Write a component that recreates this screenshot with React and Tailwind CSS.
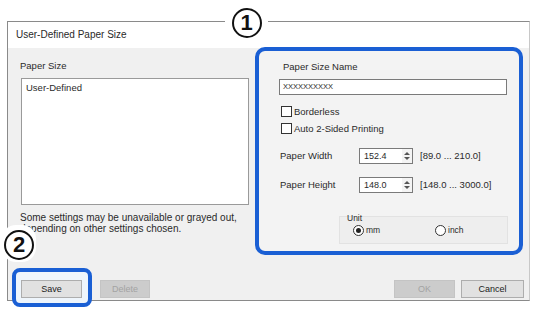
import React from "react";

const Btn = ({ children, disabled, className = "" }) => (
  <div
    className={`h-[18px] flex items-center justify-center border text-[9px] ${
      disabled
        ? "bg-[#cccccc] border-[#c4c4c4] text-[#a3a3a3]"
        : "bg-[#e1e1e1] border-[#adadad] text-[#222]"
    } ${className}`}
  >
    {children}
  </div>
);

const Check = ({ label }) => (
  <div className="flex items-center gap-[2px] h-[11px]">
    <div className="w-[11px] h-[11px] border border-[#333] bg-white" />
    <span>{label}</span>
  </div>
);

const Spin = ({ value }) => (
  <div className="w-[54px] h-[16px] flex border border-[#7a7a7a] bg-white">
    <div className="flex-1 pl-[4px] flex items-center text-[9px]">{value}</div>
    <div className="w-[10px] flex flex-col items-center justify-center gap-[2px] bg-[#f4f4f4]">
      <div className="w-0 h-0 border-l-[3px] border-r-[3px] border-b-[3px] border-l-transparent border-r-transparent border-b-[#555]" />
      <div className="w-0 h-0 border-l-[3px] border-r-[3px] border-t-[3px] border-l-transparent border-r-transparent border-t-[#555]" />
    </div>
  </div>
);

const Radio = ({ label, checked }) => (
  <div className="flex items-center gap-[2px]">
    <div className="w-[11px] h-[11px] rounded-full border border-[#333] bg-white flex items-center justify-center">
      {checked && <div className="w-[5px] h-[5px] rounded-full bg-[#222]" />}
    </div>
    <span>{label}</span>
  </div>
);

const Badge = ({ n }) => (
  <div className="w-[30px] h-[30px] rounded-full border-2 border-[#111] bg-white flex items-center justify-center text-[22px] font-bold leading-none text-[#111]">
    {n}
  </div>
);

export default function App() {
  return (
    <div
      className="relative w-[534px] h-[310px] overflow-hidden bg-white pt-[21px] pl-[7px] text-[#2a2a2a] text-[9.5px] leading-[12px]"
      style={{ fontFamily: '"Liberation Sans", Arial, sans-serif' }}
    >
      <div className="w-[523px] h-[280px] flex flex-col border border-[#8a8a8a] border-r-[#c8c8c8]">
        {/* title */}
        <div className="h-[26px] bg-white flex items-center pl-[8px] text-[10px]">
          User-Defined Paper Size
        </div>

        {/* body */}
        <div className="flex-1 bg-[#f0f0f0] flex flex-col">
          <div className="flex items-start">
            {/* left column */}
            <div className="ml-[12px] w-[229px] pt-[12px]">
              <div>Paper Size</div>
              <div className="ml-[1px] mt-[6px] h-[127px] bg-white border border-[#9a9a9a] pl-[4px] pt-[3px]">
                User-Defined
              </div>
              <div className="mt-[7px] leading-[11px] text-[10px] whitespace-nowrap">
                <div>Some settings may be unavailable or grayed out,</div>
                <div>depending on other settings chosen.</div>
              </div>
            </div>

            {/* right panel */}
            <div className="ml-[6px] -mt-[1px] w-[268px] h-[208px] border-[4px] border-[#1a5fd4] rounded-[10px] bg-[#f3f3f3] pl-[20px] pt-[10px]">
              <div className="ml-[4px]">Paper Size Name</div>
              <div className="mt-[6px] w-[228px] h-[16px] bg-white border border-[#7a7a7a] pl-[3px] flex items-center text-[7.5px]">
                XXXXXXXXXX
              </div>
              <div className="ml-[2px] mt-[11px] flex flex-col gap-[6px]">
                <Check label="Borderless" />
                <Check label="Auto 2-Sided Printing" />
              </div>
              <div className="mt-[14px] flex items-center">
                <div className="w-[80px] pl-[1px]">Paper Width</div>
                <Spin value="152.4" />
                <div className="ml-[7px]">[89.0 ... 210.0]</div>
              </div>
              <div className="mt-[13px] flex items-center">
                <div className="w-[80px] pl-[1px]">Paper Height</div>
                <Spin value="148.0" />
                <div className="ml-[7px]">[148.0 ... 3000.0]</div>
              </div>
              <div className="ml-[60px] mt-[23px] w-[169px] h-[28px] border border-[#e2e2e2] bg-[#eeeeee] text-[8.5px]">
                <div className="ml-[7px] -mt-[3px] leading-[9px]">Unit</div>
                <div className="flex items-center mt-[1px] ml-[13px]">
                  <div className="w-[82px]">
                    <Radio label="mm" checked />
                  </div>
                  <Radio label="inch" />
                </div>
              </div>
            </div>
          </div>

          {/* footer */}
          <div className="mt-auto pb-[2px] flex items-end justify-between pl-[13px] pr-[5px]">
            <div className="flex items-center gap-[18px]">
              <div className="relative">
                <div className="absolute -left-[9px] -right-[10px] -top-[12px] -bottom-[9px] border-[4px] border-[#1a5fd4] rounded-[8px] bg-[#eef5fc]" />
                <Btn className="relative w-[61px] border-[#0a6fd0] border-[1.5px]">Save</Btn>
              </div>
              <Btn disabled className="w-[50px]">Delete</Btn>
            </div>
            <div className="flex items-center gap-[6px]">
              <Btn disabled className="w-[61px]">OK</Btn>
              <Btn className="w-[63px]">Cancel</Btn>
            </div>
          </div>
        </div>
      </div>

      {/* annotation badges */}
      <div className="absolute left-[225px] top-[6px] w-[43px] h-[33px] bg-white flex items-center justify-center">
        <Badge n="1" />
      </div>
      <div className="absolute left-[2px] top-[225px] w-[34px] h-[37px] rounded-[14px] bg-white flex items-end justify-center pb-[2px]">
        <Badge n="2" />
      </div>
    </div>
  );
}
